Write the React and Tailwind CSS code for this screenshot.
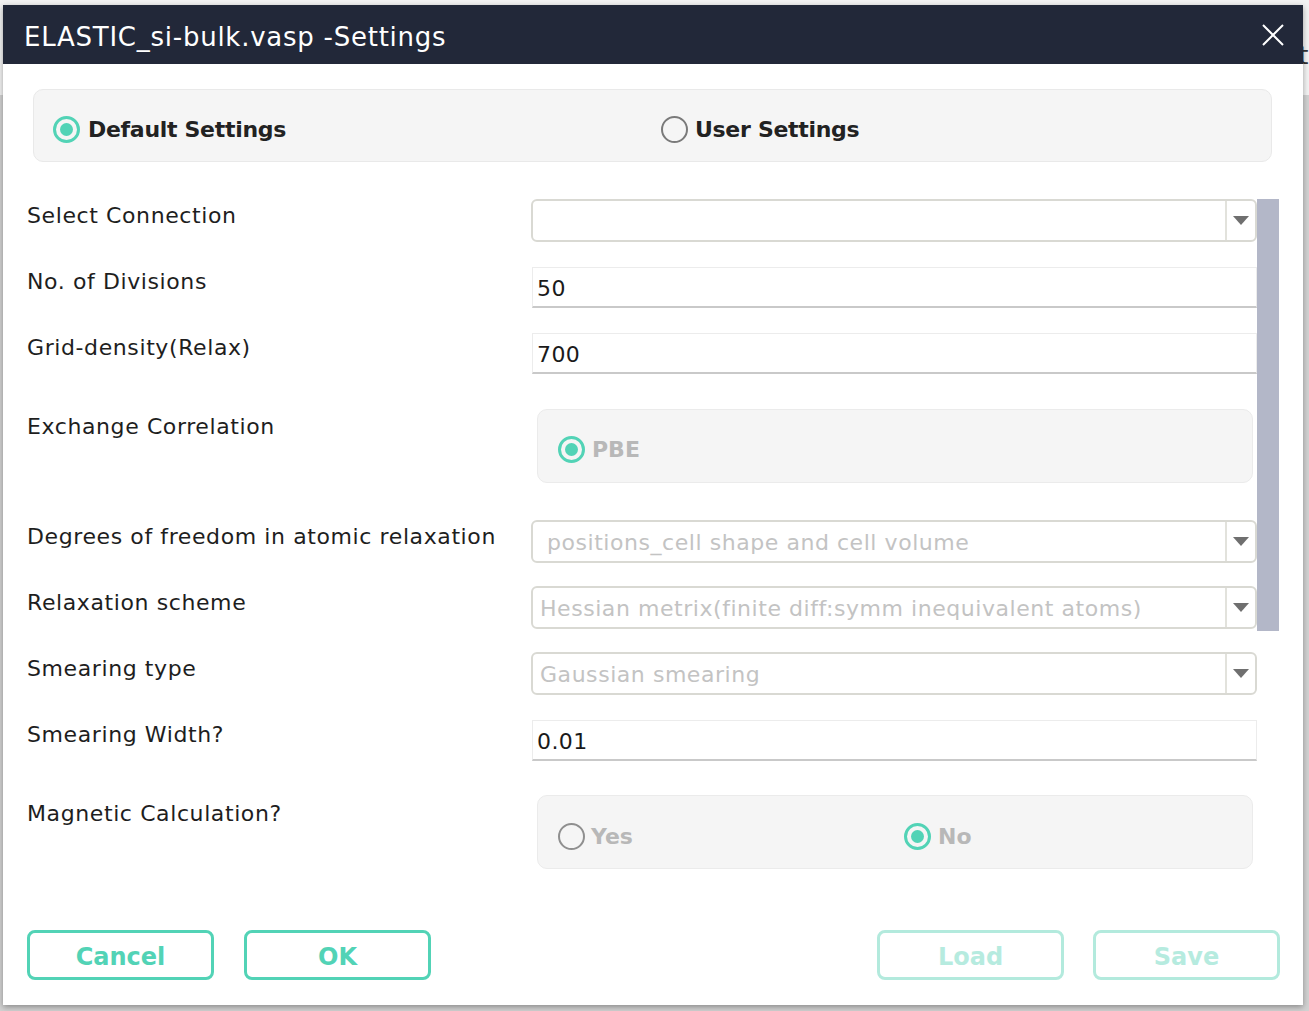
import React from "react";

const Radio = ({ checked, muted }) => (
  <span
    className={`flex h-[27px] w-[27px] shrink-0 items-center justify-center rounded-full ${
      checked ? "border-[3px] border-[#52d3b6]" : muted ? "border-2 border-[#8f8f8f]" : "border-2 border-[#7a7a7a]"
    }`}
  >
    {checked && <span className="h-[13px] w-[13px] rounded-full bg-[#52d3b6]" />}
  </span>
);

const Label = ({ children, pt }) => (
  <div className={`w-[504px] shrink-0 text-[22px] leading-[26px] tracking-[0.6px] text-[#1e1e1e] ${pt}`}>{children}</div>
);

const Select = ({ value, pl = "pl-[9px]" }) => (
  <div className="flex h-[43px] w-[726px] items-stretch rounded-[6px] border-2 border-[#d9d9d3] bg-white">
    <div className={`flex flex-1 items-center pt-[2px] ${pl} text-[22px] tracking-[0.55px] text-[#c3c3c3]`}>{value}</div>
    <div className="flex w-[30px] items-center justify-center border-l-2 border-[#e2e2dc]">
      <svg width="16" height="9" viewBox="0 0 16 9">
        <path d="M0 0 L16 0 L8 9 Z" fill="#6f6f6f" />
      </svg>
    </div>
  </div>
);

const TextInput = ({ value }) => (
  <div className="ml-[1px] flex h-[41px] w-[725px] items-center border border-[#ececec] border-b-2 border-b-[#c9c9c9] pl-[4px] pt-[2px] text-[22px] tracking-[0.4px] text-[#1a1a1a]">
    {value}
  </div>
);

const Btn = ({ children, faded }) => (
  <button
    className={`flex h-[50px] w-[187px] items-center justify-center rounded-[8px] border-[3px] bg-white pt-[3px] text-[24px] font-bold ${
      faded ? "border-[#b3eadd] text-[#b6ebdf]" : "border-[#52d3b6] text-[#52d3b6]"
    }`}
  >
    {children}
  </button>
);

export default function App() {
  return (
    <div className="relative h-[1011px] w-[1309px] overflow-hidden bg-[#d2d2d2] font-['DejaVu_Sans',sans-serif]">
      {/* page behind the dialog */}
      <div className="flex h-[95px] items-center justify-end bg-[#f3f3f3] pt-[16px] text-[24px] text-[#333]">
        <span className="-mr-[6px]">Setti</span>
      </div>

      {/* dialog */}
      <div className="absolute left-[3px] top-[5px] h-[1000px] w-[1300px] bg-white shadow-[0_2px_6px_rgba(0,0,0,0.35)]">
        <div className="flex h-[59px] items-center justify-between bg-[#222839] pl-[21px] pr-[19px]">
          <span className="pt-[5px] text-[26px] tracking-[0.75px] text-white">ELASTIC_si-bulk.vasp -Settings</span>
          <svg width="22" height="22" viewBox="0 0 22 22">
            <path d="M1 1 L21 21 M21 1 L1 21" stroke="#ffffff" strokeWidth="2" />
          </svg>
        </div>

        <div className="relative pl-[24px] pt-[25px]">
          <div className="ml-[6px] flex h-[73px] w-[1239px] items-center rounded-[10px] border border-[#e9e9e9] bg-[#f5f5f5] pl-[19px] pt-[8px]">
            <div className="flex w-[608px] items-center gap-[8px]">
              <Radio checked />
              <span className="text-[22px] font-bold tracking-[-0.3px] text-[#222]">Default Settings</span>
            </div>
            <div className="flex items-center gap-[7px]">
              <Radio />
              <span className="text-[22px] font-bold tracking-[-0.3px] text-[#222]">User Settings</span>
            </div>
          </div>

          <div className="mt-[37px] flex items-start">
            <Label pt="pt-[4px]">Select Connection</Label>
            <Select value="" />
          </div>

          <div className="mt-[25px] flex items-start">
            <Label pt="pt-[2px]">No. of Divisions</Label>
            <TextInput value="50" />
          </div>

          <div className="mt-[25px] flex items-start">
            <Label pt="pt-[2px]">Grid-density(Relax)</Label>
            <TextInput value="700" />
          </div>

          <div className="mt-[35px] flex items-start">
            <Label pt="pt-[5px]">Exchange Correlation</Label>
            <div className="ml-[6px] flex h-[74px] w-[716px] items-center gap-[7px] rounded-[10px] border border-[#ebebeb] bg-[#f5f5f5] pl-[20px] pt-[6px]">
              <Radio checked />
              <span className="text-[22px] font-bold text-[#b8b8b8]">PBE</span>
            </div>
          </div>

          <div className="mt-[37px] flex items-start">
            <Label pt="pt-[4px]">Degrees of freedom in atomic relaxation</Label>
            <Select value="positions_cell shape and cell volume" pl="pl-[14px]" />
          </div>

          <div className="mt-[23px] flex items-start">
            <Label pt="pt-[4px]">Relaxation scheme</Label>
            <Select value="Hessian metrix(finite diff:symm inequivalent atoms)" pl="pl-[7px]" />
          </div>

          <div className="mt-[23px] flex items-start">
            <Label pt="pt-[4px]">Smearing type</Label>
            <Select value="Gaussian smearing" pl="pl-[7px]" />
          </div>

          <div className="mt-[25px] flex items-start">
            <Label pt="pt-[2px]">Smearing Width?</Label>
            <TextInput value="0.01" />
          </div>

          <div className="mt-[34px] flex items-start">
            <Label pt="pt-[6px]">Magnetic Calculation?</Label>
            <div className="ml-[6px] flex h-[74px] w-[716px] items-center rounded-[10px] border border-[#ebebeb] bg-[#f5f5f5] pl-[20px] pt-[8px]">
              <div className="flex w-[346px] items-center gap-[6px]">
                <Radio muted />
                <span className="text-[22px] font-bold text-[#b8b8b8]">Yes</span>
              </div>
              <div className="flex items-center gap-[7px]">
                <Radio checked />
                <span className="text-[22px] font-bold text-[#b8b8b8]">No</span>
              </div>
            </div>
          </div>

          <div className="mt-[61px] flex items-center">
            <Btn>Cancel</Btn>
            <div className="ml-[30px]">
              <Btn>OK</Btn>
            </div>
            <div className="ml-[446px]">
              <Btn faded>Load</Btn>
            </div>
            <div className="ml-[29px]">
              <Btn faded>Save</Btn>
            </div>
          </div>

          {/* scrollbar thumb */}
          <div className="absolute left-[1254px] top-[135px] h-[432px] w-[22px] bg-[#b3b7c8]" />
        </div>
      </div>
    </div>
  );
}
